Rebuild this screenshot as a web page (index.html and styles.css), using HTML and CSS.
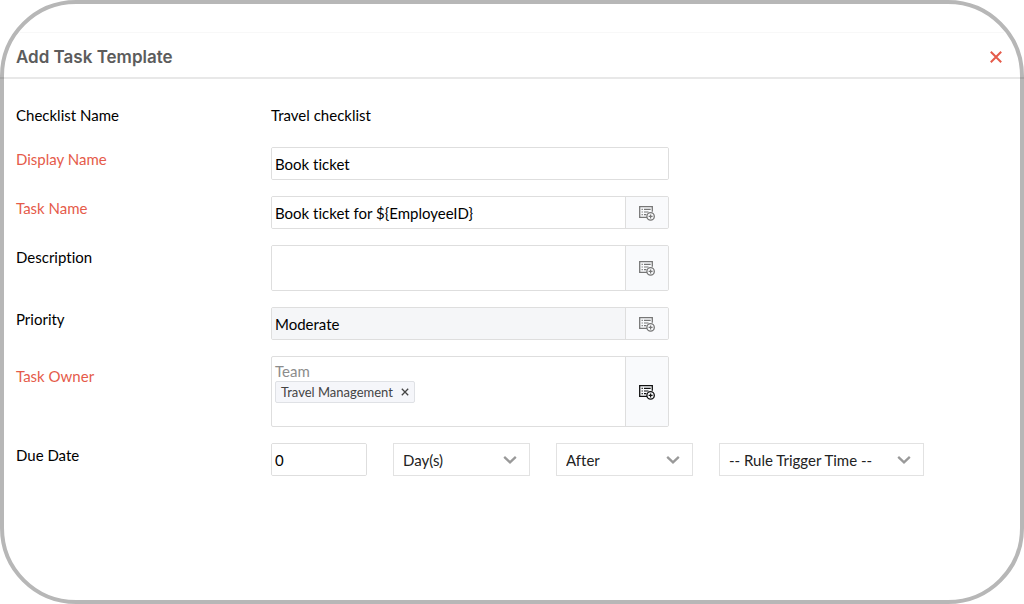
FILE: index.html
```html
<!DOCTYPE html>
<html lang="en">
<head>
<meta charset="utf-8">
<meta name="viewport" content="width=device-width, initial-scale=1">
<title>Add Task Template</title>
<link rel="stylesheet" href="styles.css">
</head>
<body>
<svg class="defs" aria-hidden="true">
  <symbol id="picker" viewBox="0 0 16 16">
    <path d="M8 12.4H.7V1.6h12.6v5.2" fill="none" stroke="currentColor" stroke-width="1.3"/>
    <path d="M2.6 4.4h1.2M5 4.4h6.7M2.6 7h1.2M5 7h4.5M2.6 9.6h1.2M5 9.6h2.4" fill="none" stroke="currentColor" stroke-width="1.2"/>
    <circle cx="11.6" cy="11.4" r="3.7" fill="none" stroke="currentColor" stroke-width="1.3"/>
    <path d="M11.6 9.4v4M9.6 11.4h4" fill="none" stroke="currentColor" stroke-width="1.2"/>
  </symbol>
  <symbol id="chevron" viewBox="0 0 14 10">
    <path d="M1.2 1.8 7 7.4l5.8-5.6" fill="none" stroke="currentColor" stroke-width="2.3"/>
  </symbol>
</svg>
<main class="dialog">
  <div class="strip"></div>
  <header class="header">
    <h1 class="title">Add Task Template</h1>
    <button class="close" type="button" aria-label="Close">
      <svg width="12" height="12" viewBox="0 0 12 12" aria-hidden="true"><path d="m.8.8 10.4 10.4M11.2.8.8 11.2" fill="none" stroke="currentColor" stroke-width="2"/></svg>
    </button>
  </header>
  <form class="form">
    <div class="row">
      <span class="label">Checklist Name</span>
      <span class="value">Travel checklist</span>
    </div>
    <div class="row">
      <label class="label required" for="display">Display Name</label>
      <div class="field"><input class="input" id="display" type="text" value="Book ticket"></div>
    </div>
    <div class="row">
      <label class="label required" for="task">Task Name</label>
      <div class="field">
        <input class="input" id="task" type="text" value="Book ticket for ${EmployeeID}">
        <button class="pick" type="button" aria-label="Insert field for task name"><svg class="icon"><use href="#picker"/></svg></button>
      </div>
    </div>
    <div class="row">
      <label class="label" for="description">Description</label>
      <div class="field tall">
        <textarea class="input" id="description" rows="1"></textarea>
        <button class="pick" type="button" aria-label="Insert field for description"><svg class="icon"><use href="#picker"/></svg></button>
      </div>
    </div>
    <div class="row">
      <label class="label" for="priority">Priority</label>
      <div class="field">
        <input class="input shaded" id="priority" type="text" value="Moderate" readonly>
        <button class="pick" type="button" aria-label="Choose priority"><svg class="icon"><use href="#picker"/></svg></button>
      </div>
    </div>
    <div class="row">
      <span class="label required lowered" id="owner">Task Owner</span>
      <div class="field owner" role="group" aria-labelledby="owner">
        <div class="people">
          <span class="group">Team</span>
          <span class="chip">Travel Management
            <button class="remove" type="button" aria-label="Remove Travel Management"><svg width="8" height="8" viewBox="0 0 8 8" aria-hidden="true"><path d="m.8.8 6.4 6.4M7.2.8.8 7.2" fill="none" stroke="currentColor" stroke-width="1.3"/></svg></button>
          </span>
        </div>
        <button class="pick dark" type="button" aria-label="Choose task owner"><svg class="icon"><use href="#picker"/></svg></button>
      </div>
    </div>
    <div class="row">
      <label class="label" for="due">Due Date</label>
      <div class="due">
        <div class="field number"><input class="input" id="due" type="text" value="0"></div>
        <div class="choice">
          <select class="select" aria-label="Unit"><option>Day(s)</option></select>
          <svg class="chevron"><use href="#chevron"/></svg>
        </div>
        <div class="choice">
          <select class="select" aria-label="Before or after"><option>After</option></select>
          <svg class="chevron"><use href="#chevron"/></svg>
        </div>
        <div class="choice wide">
          <select class="select" aria-label="Reference time"><option>-- Rule Trigger Time --</option></select>
          <svg class="chevron"><use href="#chevron"/></svg>
        </div>
      </div>
    </div>
  </form>
</main>
</body>
</html>
```

FILE: styles.css
```css
* { box-sizing: border-box; }
body {
  margin: 0;
  background: #fff;
  color: #000;
  font: 15px/24px Lato, sans-serif;
  font-variant-ligatures: none;
}
button, input, textarea, select {
  font: inherit;
  font-variant-ligatures: none;
  color: inherit;
}
button { padding: 0; border: 0; background: none; cursor: pointer; }
.defs { display: none; }
.dialog {
  min-height: 100vh;
  border: 4px solid #b7b7b7;
  border-radius: 76px;
}
.strip {
  height: 29px;
  border-bottom: 1px solid #f8f8f8;
  margin: 0 16px;
}
.header {
  display: flex;
  align-items: center;
  justify-content: space-between;
  height: 46px;
  margin: 0 -4px;
  padding: 3px 22px 0 16px;
  border-bottom: 2px solid rgba(0, 0, 0, 0.09);
}
.title {
  margin: 0;
  color: #5c5c5c;
  font: 600 17px/24px Inter, sans-serif;
}
.close { display: flex; color: #e55b4a; }
.form {
  display: flex;
  flex-direction: column;
  gap: 16px;
  padding: 24px 12px 32px;
}
.row {
  display: grid;
  grid-template-columns: 255px 1fr;
  align-items: start;
}
.row:first-child { min-height: 28px; }
.required { color: #e55b4a; }
.lowered { padding-top: 8px; }
.field {
  display: flex;
  width: 100%;
  max-width: 398px;
  min-height: 33px;
  border: 1px solid #dedede;
  border-radius: 2px;
  overflow: hidden;
}
.tall { min-height: 46px; }
.owner { min-height: 71px; }
.input {
  flex: 1;
  min-width: 0;
  padding: 0 3px;
  border: 0;
  background: #fff;
  resize: none;
}
.shaded { background: #f5f6f8; }
.pick {
  display: flex;
  flex: none;
  align-items: center;
  justify-content: center;
  width: 43px;
  border-left: 1px solid #dedede;
  background: #f9fafc;
  color: #777;
}
.dark { color: #111; }
.icon { width: 16px; height: 16px; }
.people {
  display: flex;
  flex: 1;
  flex-direction: column;
  align-items: flex-start;
  padding: 4px 3px;
}
.group { color: #8c8c8c; line-height: 20px; }
.chip {
  display: flex;
  align-items: center;
  gap: 8px;
  height: 22px;
  padding: 0 5px;
  border: 1px solid #dfe1e5;
  border-radius: 2px;
  background: #f5f6fa;
  color: #444;
  font-size: 13px;
}
.remove { display: flex; }
.due { display: flex; flex-wrap: wrap; gap: 26px; }
.number { width: 96px; }
.choice { display: grid; width: 137px; align-items: center; }
.wide { width: 205px; }
.select, .chevron { grid-area: 1 / 1; }
.select {
  width: 100%;
  height: 33px;
  padding: 0 32px 0 9px;
  border: 1px solid #e2e2e2;
  border-radius: 0;
  background: #fff;
  color: #222;
  appearance: none;
}
.chevron {
  justify-self: end;
  width: 14px;
  height: 10px;
  margin-right: 13px;
  color: #999;
  pointer-events: none;
}
```
